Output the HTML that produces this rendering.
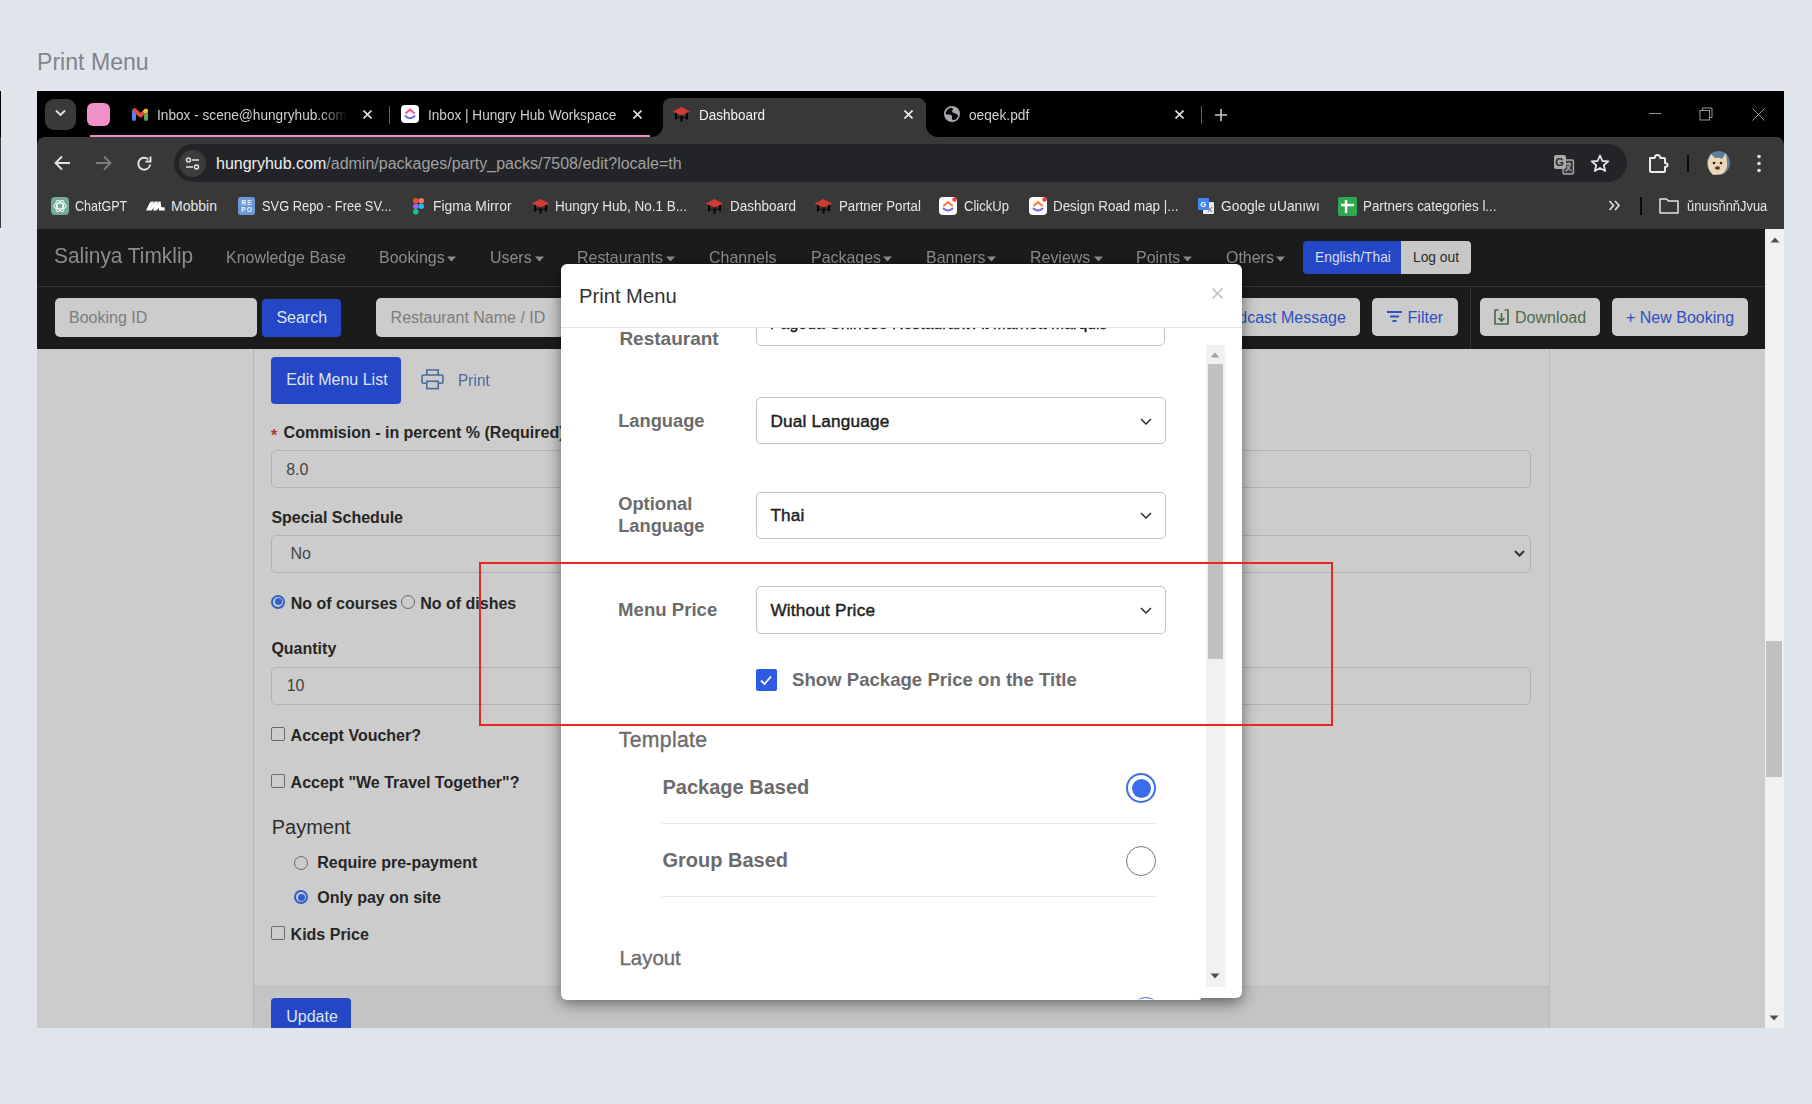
<!DOCTYPE html>
<html><head><meta charset="utf-8"><title>Print Menu</title>
<style>
html,body{margin:0;padding:0;}
body{width:1812px;height:1104px;overflow:hidden;position:relative;background:#e0e4eb;font-family:"Liberation Sans",sans-serif;}
body div, body svg{position:absolute;}
.t{white-space:nowrap;}
.fade{overflow:hidden;-webkit-mask-image:linear-gradient(90deg,#000 85%,transparent);}
</style></head><body>
<div class="t" style="left:37px;top:51.35px;font-size:23.1px;line-height:23.1px;color:#80858c;font-weight:400;">Print Menu</div>
<div style="left:0px;top:91px;width:1px;height:46px;background:#000"></div>
<div style="left:0px;top:137px;width:1px;height:91px;background:#3a3a3a"></div>
<div style="left:37px;top:91px;width:1747px;height:56px;background:#000"></div>
<div style="left:37px;top:137px;width:1747px;height:92px;background:#383838;border-top-left-radius:8px;border-top-right-radius:8px"></div>
<div style="left:45px;top:99px;width:31px;height:31px;background:#3a3a3a;border-radius:9px"></div>
<svg style="left:55px;top:109px" width="11" height="8" viewBox="0 0 11 8"><path d="M1 1.5 L5.5 6 L10 1.5" fill="none" stroke="#e8e8e8" stroke-width="1.8"/></svg>
<div style="left:87px;top:103px;width:23px;height:23px;background:#ef90c9;border-radius:6px"></div>
<div style="left:90px;top:135px;width:560px;height:2px;background:#f08cc8"></div>
<div style="left:663px;top:98px;width:263px;height:39px;background:#383838;border-radius:8px 8px 0 0"></div>
<svg style="left:651px;top:125px" width="12" height="12" viewBox="0 0 12 12"><path d="M0 12 A12 12 0 0 0 12 0 L12 12 Z" fill="#383838"/></svg>
<svg style="left:926px;top:125px" width="12" height="12" viewBox="0 0 12 12"><path d="M12 12 A12 12 0 0 1 0 0 L0 12 Z" fill="#383838"/></svg>
<div style="left:388.5px;top:106px;width:1.5px;height:18px;background:#5f5f5f"></div>
<div style="left:1200.5px;top:106px;width:1.5px;height:18px;background:#5f5f5f"></div>
<svg style="left:130px;top:105px" width="20" height="18" viewBox="0 0 20 18"><path d="M4 6 V14" stroke="#4f86f7" stroke-width="4" stroke-linecap="round"/><path d="M16 6 V14" stroke="#56ab5f" stroke-width="4" stroke-linecap="round"/><path d="M4.5 5 L10.5 10.5 L14.8 6.6" fill="none" stroke="#df4a3b" stroke-width="4" stroke-linecap="round" stroke-linejoin="round"/><path d="M15.2 6.2 L16 5.5" stroke="#f3c03a" stroke-width="4" stroke-linecap="round"/></svg>
<div class="t fade" style="left:157px;top:108.15px;width:196px;height:18px;font-size:14px;line-height:14px;color:#d0d0d0;transform:scaleX(0.975);transform-origin:0 0">Inbox - scene@hungryhub.com</div>
<svg style="left:362.5px;top:110px" width="9" height="9" viewBox="0 0 9 9"><path d="M0.5 0.5 L8.5 8.5 M8.5 0.5 L0.5 8.5" stroke="#e0e0e0" stroke-width="1.6"/></svg>
<div style="left:401px;top:105px;width:18px;height:18px;background:#fff;border-radius:4px"></div>
<svg style="left:401px;top:105px" width="18" height="18" viewBox="0 0 18 18"><path d="M5 8 L9 4.5 L13 8" fill="none" stroke="#f7568a" stroke-width="2" stroke-linecap="round"/><path d="M4.5 11 Q9 15.5 13.5 11" fill="none" stroke="#7b68ee" stroke-width="2" stroke-linecap="round"/></svg>
<div class="t" style="left:427.6px;top:108.05px;font-size:14px;line-height:14px;color:#d0d0d0;font-weight:400;;transform:scaleX(0.971);transform-origin:0 0">Inbox | Hungry Hub Workspace</div>
<svg style="left:633px;top:110px" width="9" height="9" viewBox="0 0 9 9"><path d="M0.5 0.5 L8.5 8.5 M8.5 0.5 L0.5 8.5" stroke="#e0e0e0" stroke-width="1.6"/></svg>
<svg style="left:671px;top:105px" width="21" height="18" viewBox="0 0 21 18"><rect x="4" y="7" width="2" height="7.5" fill="#050505"/><rect x="15" y="7" width="2" height="7.5" fill="#050505"/><rect x="9.6" y="9" width="2" height="7.7" fill="#050505"/><path d="M5 11.8 L10.6 13.2 L16 11.8" fill="none" stroke="#111" stroke-width="1.3"/><path d="M1.6 6.4 L10.6 2.1 L19.1 6.4 L10.6 10.5 Z" fill="#d23a33"/></svg>
<div class="t" style="left:699px;top:108.05px;font-size:14px;line-height:14px;color:#f2f2f2;font-weight:400;;transform:scaleX(0.963);transform-origin:0 0">Dashboard</div>
<svg style="left:904px;top:110px" width="9" height="9" viewBox="0 0 9 9"><path d="M0.5 0.5 L8.5 8.5 M8.5 0.5 L0.5 8.5" stroke="#f0f0f0" stroke-width="1.6"/></svg>
<svg style="left:943px;top:105px" width="18" height="18" viewBox="0 0 18 18"><circle cx="9" cy="9" r="8" fill="#a6a9ae"/><path d="M2.7 9.2 A6.3 6.3 0 0 1 8.6 2.7 Q10.5 3.3 9.8 4.8 Q8.6 5.6 9.3 7.2 Q10.6 8.2 11.9 8.3 Q13.2 8.6 15.2 10.3 A6.3 6.3 0 0 1 10 15.3 Q8.6 14.8 9 13.3 Q9.8 12 8.7 10.6 Q7.5 9.3 5 9.4 Z" fill="#000"/></svg>
<div class="t" style="left:969px;top:108.05px;font-size:14px;line-height:14px;color:#d0d0d0;font-weight:400;;transform:scaleX(0.979);transform-origin:0 0">oeqek.pdf</div>
<svg style="left:1175px;top:110px" width="9" height="9" viewBox="0 0 9 9"><path d="M0.5 0.5 L8.5 8.5 M8.5 0.5 L0.5 8.5" stroke="#e0e0e0" stroke-width="1.6"/></svg>
<svg style="left:1215px;top:108.5px" width="12" height="12" viewBox="0 0 12 12"><path d="M6 0 V12 M0 6 H12" stroke="#c8c8c8" stroke-width="1.6"/></svg>
<div style="left:1649px;top:113px;width:12px;height:1px;background:#9a9a9a"></div>
<svg style="left:1699px;top:107px" width="14" height="14" viewBox="0 0 14 14"><rect x="1" y="3.5" width="9.5" height="9.5" fill="none" stroke="#9a9a9a" stroke-width="1"/><path d="M3.5 3.5 V1 H13 V10.5 H10.5" fill="none" stroke="#9a9a9a" stroke-width="1"/></svg>
<svg style="left:1752px;top:108px" width="13" height="13" viewBox="0 0 13 13"><path d="M0.5 0.5 L12.5 12.5 M12.5 0.5 L0.5 12.5" stroke="#9a9a9a" stroke-width="1"/></svg>
<svg style="left:54px;top:155px" width="17" height="16" viewBox="0 0 17 16"><path d="M16 8 H2 M8 1.5 L1.5 8 L8 14.5" fill="none" stroke="#e3e3e3" stroke-width="1.9"/></svg>
<svg style="left:95px;top:155px" width="17" height="16" viewBox="0 0 17 16"><path d="M1 8 H15 M9 1.5 L15.5 8 L9 14.5" fill="none" stroke="#7d7d7d" stroke-width="1.9"/></svg>
<svg style="left:136px;top:155px" width="17" height="17" viewBox="0 0 17 17"><path d="M14.2 9.5 A6 6 0 1 1 12.2 4.2" fill="none" stroke="#e3e3e3" stroke-width="1.9"/><path d="M14.5 1.5 V6.5 H9.5" fill="none" stroke="#e3e3e3" stroke-width="1.9"/></svg>
<div style="left:174px;top:144px;width:1453px;height:38px;background:#232427;border-radius:19px"></div>
<div style="left:179px;top:150px;width:27px;height:27px;background:#3c3c3c;border-radius:50%"></div>
<svg style="left:185px;top:156px" width="15" height="15" viewBox="0 0 15 15"><circle cx="3.5" cy="4" r="2" fill="none" stroke="#e3e3e3" stroke-width="1.5"/><path d="M7 4 H14" stroke="#e3e3e3" stroke-width="1.5"/><circle cx="11.5" cy="11" r="2" fill="none" stroke="#e3e3e3" stroke-width="1.5"/><path d="M1 11 H8" stroke="#e3e3e3" stroke-width="1.5"/></svg>
<div class="t" style="left:216px;top:156.26px;font-size:16px;line-height:16px;color:#a0a0a0;font-weight:400;"><span style="color:#f0f0f0">hungryhub.com</span>/admin/packages/party_packs/7508/edit?locale=th</div>
<svg style="left:1553px;top:154px" width="22" height="21" viewBox="0 0 22 21"><rect x="10" y="6" width="10.5" height="14" rx="1.5" fill="#3a3a3a" stroke="#a8a8a8" stroke-width="1.4"/><rect x="1" y="1" width="12" height="14" rx="2" fill="#a8a8a8"/><text x="2.2" y="12.2" font-size="11" font-family="Liberation Sans" font-weight="700" fill="#2a2a2a">G</text><path d="M12.5 10 H18 M15.5 8.5 V10 M17 10.5 Q15.5 16 12.5 17 M14 12 Q16 15.5 18.5 17" fill="none" stroke="#a8a8a8" stroke-width="1.3"/></svg>
<svg style="left:1590px;top:154px" width="20" height="19" viewBox="0 0 20 19"><path d="M10 1.5 L12.4 7 L18.3 7.4 L13.8 11.3 L15.2 17 L10 14 L4.8 17 L6.2 11.3 L1.7 7.4 L7.6 7 Z" fill="none" stroke="#e3e3e3" stroke-width="1.8" stroke-linejoin="round"/></svg>
<svg style="left:1647px;top:152px" width="22" height="22" viewBox="0 0 22 22"><path d="M3 6 H7.5 Q8 3 10.5 3 Q13 3 13.5 6 H17 Q18 6 18 7 V11 Q20.5 11.3 20.5 13 Q20.5 14.7 18 15 V19 Q18 20 17 20 H4 Q3 20 3 19 Z" fill="none" stroke="#ececec" stroke-width="2" stroke-linejoin="round"/></svg>
<div style="left:1687px;top:155px;width:2px;height:17px;background:#0a0a0a"></div>
<div style="left:1707px;top:151px;width:23px;height:24px;border-radius:50%;background:#5f7f9f;overflow:hidden"></div>
<svg style="left:1707px;top:151px" width="23" height="24" viewBox="0 0 23 24"><path d="M1 10 L4 3 L8 7 Q12 6 15 8 L19 2 L20 11 Q21 19 15 23 L6 24 Q0 19 1 10 Z" fill="#ecd6b4"/><circle cx="7" cy="12" r="1.3" fill="#222"/><circle cx="14" cy="12" r="1.3" fill="#222"/><ellipse cx="10.5" cy="17" rx="2.5" ry="1.8" fill="#4a3a30"/></svg>
<svg style="left:1756px;top:154px" width="6" height="19" viewBox="0 0 6 19"><circle cx="3" cy="2.5" r="1.8" fill="#e3e3e3"/><circle cx="3" cy="9.5" r="1.8" fill="#e3e3e3"/><circle cx="3" cy="16.5" r="1.8" fill="#e3e3e3"/></svg>
<div style="left:51px;top:197px;width:18px;height:18px;background:#74aa9c;border-radius:4px"></div>
<svg style="left:51px;top:197px" width="18" height="18" viewBox="0 0 18 18"><g fill="none" stroke="#fff" stroke-width="1.1"><ellipse cx="9" cy="9" rx="6" ry="3" /><ellipse cx="9" cy="9" rx="6" ry="3" transform="rotate(60 9 9)"/><ellipse cx="9" cy="9" rx="6" ry="3" transform="rotate(120 9 9)"/></g></svg>
<div class="t" style="left:74.7px;top:199.35px;font-size:14px;line-height:14px;color:#e6e6e6;font-weight:400;;transform:scaleX(0.895);transform-origin:0 0">ChatGPT</div>
<svg style="left:146px;top:201px" width="19" height="10" viewBox="0 0 19 10"><path d="M0 9.5 L3.4 2.2 Q4.2 0.6 5.8 0.6 H7.8 L6.8 3.2 L8.8 0.6 H12 L10.8 3.6 L12.7 0.6 H14.6 L15.4 6.2 H18.4 L18.9 9.5 H13 L12.6 6.8 L10.6 9.5 H7 L7.8 6.6 L5.6 9.5 Z" fill="#fafafa"/></svg>
<div class="t" style="left:171px;top:199.35px;font-size:14px;line-height:14px;color:#e6e6e6;font-weight:400;;transform:scaleX(1.0);transform-origin:0 0">Mobbin</div>
<div style="left:238px;top:197px;width:17px;height:18px;box-sizing:border-box;background:#6a9ad8;border-radius:2.5px;color:#eef3fb;font:700 6.5px/7.5px 'Liberation Sans';text-align:center;padding-top:1.5px;padding-left:1px;letter-spacing:1px">RE<br>PO</div>
<div class="t" style="left:261.7px;top:199.35px;font-size:14px;line-height:14px;color:#e6e6e6;font-weight:400;;transform:scaleX(0.918);transform-origin:0 0">SVG Repo - Free SV...</div>
<svg style="left:412px;top:197px" width="13" height="18" viewBox="0 0 13 18"><rect x="1" y="1" width="5.5" height="5.5" rx="2.7" fill="#f24e1e"/><rect x="6.5" y="1" width="5.5" height="5.5" rx="2.7" fill="#ff7262"/><rect x="1" y="6.5" width="5.5" height="5.5" rx="2.7" fill="#a259ff"/><circle cx="9.25" cy="9.25" r="2.75" fill="#1abcfe"/><rect x="1" y="12" width="5.5" height="5.5" rx="2.7" fill="#0acf83"/><rect x="3.7" y="1" width="5.6" height="11" fill="none"/></svg>
<div class="t" style="left:433.2px;top:199.35px;font-size:14px;line-height:14px;color:#e6e6e6;font-weight:400;;transform:scaleX(0.99);transform-origin:0 0">Figma Mirror</div>
<svg style="left:530px;top:197px" width="21" height="18" viewBox="0 0 21 18"><rect x="4" y="7" width="2" height="7.5" fill="#050505"/><rect x="15" y="7" width="2" height="7.5" fill="#050505"/><rect x="9.6" y="9" width="2" height="7.7" fill="#050505"/><path d="M5 11.8 L10.6 13.2 L16 11.8" fill="none" stroke="#111" stroke-width="1.3"/><path d="M1.6 6.4 L10.6 2.1 L19.1 6.4 L10.6 10.5 Z" fill="#d23a33"/></svg>
<div class="t" style="left:555.3px;top:199.35px;font-size:14px;line-height:14px;color:#e6e6e6;font-weight:400;;transform:scaleX(0.964);transform-origin:0 0">Hungry Hub, No.1 B...</div>
<svg style="left:704px;top:197px" width="21" height="18" viewBox="0 0 21 18"><rect x="4" y="7" width="2" height="7.5" fill="#050505"/><rect x="15" y="7" width="2" height="7.5" fill="#050505"/><rect x="9.6" y="9" width="2" height="7.7" fill="#050505"/><path d="M5 11.8 L10.6 13.2 L16 11.8" fill="none" stroke="#111" stroke-width="1.3"/><path d="M1.6 6.4 L10.6 2.1 L19.1 6.4 L10.6 10.5 Z" fill="#d23a33"/></svg>
<div class="t" style="left:729.5px;top:199.35px;font-size:14px;line-height:14px;color:#e6e6e6;font-weight:400;;transform:scaleX(0.963);transform-origin:0 0">Dashboard</div>
<svg style="left:813px;top:197px" width="21" height="18" viewBox="0 0 21 18"><rect x="4" y="7" width="2" height="7.5" fill="#050505"/><rect x="15" y="7" width="2" height="7.5" fill="#050505"/><rect x="9.6" y="9" width="2" height="7.7" fill="#050505"/><path d="M5 11.8 L10.6 13.2 L16 11.8" fill="none" stroke="#111" stroke-width="1.3"/><path d="M1.6 6.4 L10.6 2.1 L19.1 6.4 L10.6 10.5 Z" fill="#d23a33"/></svg>
<div class="t" style="left:838.7px;top:199.35px;font-size:14px;line-height:14px;color:#e6e6e6;font-weight:400;;transform:scaleX(0.948);transform-origin:0 0">Partner Portal</div>
<div style="left:939px;top:197px;width:18px;height:18px;background:#fff;border-radius:4px"></div>
<svg style="left:939px;top:197px" width="18" height="18" viewBox="0 0 18 18"><path d="M5 8.5 L9 5 L13 8.5" fill="none" stroke="#ff7a3d" stroke-width="2" stroke-linecap="round"/><path d="M4.5 11.5 Q9 15.5 13.5 11.5" fill="none" stroke="#7b68ee" stroke-width="2" stroke-linecap="round"/><circle cx="15.5" cy="2.5" r="2.2" fill="#ea4335"/></svg>
<div class="t" style="left:963.6px;top:199.35px;font-size:14px;line-height:14px;color:#e6e6e6;font-weight:400;;transform:scaleX(0.933);transform-origin:0 0">ClickUp</div>
<div style="left:1029px;top:197px;width:18px;height:18px;background:#fff;border-radius:4px"></div>
<svg style="left:1029px;top:197px" width="18" height="18" viewBox="0 0 18 18"><path d="M5 8.5 L9 5 L13 8.5" fill="none" stroke="#ff7a3d" stroke-width="2" stroke-linecap="round"/><path d="M4.5 11.5 Q9 15.5 13.5 11.5" fill="none" stroke="#7b68ee" stroke-width="2" stroke-linecap="round"/><circle cx="15.5" cy="2.5" r="2.2" fill="#ea4335"/></svg>
<div class="t" style="left:1053.3px;top:199.35px;font-size:14px;line-height:14px;color:#e6e6e6;font-weight:400;;transform:scaleX(0.955);transform-origin:0 0">Design Road map |...</div>
<svg style="left:1197px;top:197px" width="18" height="18" viewBox="0 0 18 18"><rect x="6" y="5" width="11" height="12" rx="1" fill="#e8eaed"/><rect x="1" y="1" width="11" height="12" rx="1" fill="#4285f4"/><text x="3.3" y="10" font-size="7.5" font-family="Liberation Sans" font-weight="700" fill="#fff">G</text><path d="M11 10 L15 15 M15 10 L11 15" stroke="#777" stroke-width="1"/></svg>
<div class="t" style="left:1220.5px;top:199.35px;font-size:14px;line-height:14px;color:#e6e6e6;font-weight:400;;transform:scaleX(0.985);transform-origin:0 0">Google uUanıwı</div>
<div style="left:1338px;top:197px;width:19px;height:19px;background:#2fa84f;border-radius:2px"></div>
<svg style="left:1338px;top:197px" width="19" height="19" viewBox="0 0 19 19"><path d="M3 8 H16 M8 3 V16" stroke="#fff" stroke-width="2.4"/></svg>
<div class="t" style="left:1362.7px;top:199.35px;font-size:14px;line-height:14px;color:#e6e6e6;font-weight:400;;transform:scaleX(0.953);transform-origin:0 0">Partners categories l...</div>
<svg style="left:1608px;top:200px" width="13" height="11" viewBox="0 0 13 11"><path d="M1.5 1 L5.5 5.5 L1.5 10 M7 1 L11 5.5 L7 10" fill="none" stroke="#e3e3e3" stroke-width="1.6"/></svg>
<div style="left:1640px;top:197px;width:2px;height:18px;background:#0a0a0a"></div>
<svg style="left:1659px;top:197px" width="20" height="17" viewBox="0 0 20 17"><path d="M1 2 H7.5 L9.5 4 H19 V16 H1 Z" fill="none" stroke="#e3e3e3" stroke-width="1.5" stroke-linejoin="round"/></svg>
<div class="t" style="left:1686.5px;top:199.35px;font-size:14px;line-height:14px;color:#e6e6e6;font-weight:400;;transform:scaleX(0.92);transform-origin:0 0">ŭnuısňnňJvua</div>
<div style="left:37px;top:229px;width:1728px;height:57px;background:#1b1b1b"></div>
<div style="left:37px;top:286px;width:1728px;height:1px;background:#353535"></div>
<div style="left:37px;top:287px;width:1728px;height:62px;background:#1b1b1b"></div>
<div style="left:1470px;top:287px;width:1px;height:62px;background:#333"></div>
<div class="t" style="left:53.5px;top:246.37px;font-size:21.3px;line-height:21.3px;color:#8c8c8c;font-weight:400;;transform:scaleX(0.98);transform-origin:0 0">Salinya Timklip</div>
<div class="t" style="left:225.6px;top:248.53px;font-size:16.5px;line-height:16.5px;color:#8c8c8c;font-weight:400;;transform:scaleX(0.967);transform-origin:0 0">Knowledge Base</div>
<div class="t" style="left:379.3px;top:248.53px;font-size:16.5px;line-height:16.5px;color:#8c8c8c;font-weight:400;;transform:scaleX(0.967);transform-origin:0 0">Bookings</div>
<svg style="left:447.3px;top:256px" width="9" height="6" viewBox="0 0 9 6"><path d="M0 0.5 H9 L4.5 5.5 Z" fill="#8c8c8c"/></svg>
<div class="t" style="left:490.2px;top:248.53px;font-size:16.5px;line-height:16.5px;color:#8c8c8c;font-weight:400;;transform:scaleX(0.967);transform-origin:0 0">Users</div>
<svg style="left:534.7px;top:256px" width="9" height="6" viewBox="0 0 9 6"><path d="M0 0.5 H9 L4.5 5.5 Z" fill="#8c8c8c"/></svg>
<div class="t" style="left:577.3px;top:248.53px;font-size:16.5px;line-height:16.5px;color:#8c8c8c;font-weight:400;;transform:scaleX(0.967);transform-origin:0 0">Restaurants</div>
<svg style="left:665.8px;top:256px" width="9" height="6" viewBox="0 0 9 6"><path d="M0 0.5 H9 L4.5 5.5 Z" fill="#8c8c8c"/></svg>
<div class="t" style="left:709px;top:248.53px;font-size:16.5px;line-height:16.5px;color:#8c8c8c;font-weight:400;;transform:scaleX(0.967);transform-origin:0 0">Channels</div>
<div class="t" style="left:810.5px;top:248.53px;font-size:16.5px;line-height:16.5px;color:#8c8c8c;font-weight:400;;transform:scaleX(0.967);transform-origin:0 0">Packages</div>
<svg style="left:882.6px;top:256px" width="9" height="6" viewBox="0 0 9 6"><path d="M0 0.5 H9 L4.5 5.5 Z" fill="#8c8c8c"/></svg>
<div class="t" style="left:925.9px;top:248.53px;font-size:16.5px;line-height:16.5px;color:#8c8c8c;font-weight:400;;transform:scaleX(0.967);transform-origin:0 0">Banners</div>
<svg style="left:986.8px;top:256px" width="9" height="6" viewBox="0 0 9 6"><path d="M0 0.5 H9 L4.5 5.5 Z" fill="#8c8c8c"/></svg>
<div class="t" style="left:1030.4px;top:248.53px;font-size:16.5px;line-height:16.5px;color:#8c8c8c;font-weight:400;;transform:scaleX(0.967);transform-origin:0 0">Reviews</div>
<svg style="left:1093.5px;top:256px" width="9" height="6" viewBox="0 0 9 6"><path d="M0 0.5 H9 L4.5 5.5 Z" fill="#8c8c8c"/></svg>
<div class="t" style="left:1135.8px;top:248.53px;font-size:16.5px;line-height:16.5px;color:#8c8c8c;font-weight:400;;transform:scaleX(0.967);transform-origin:0 0">Points</div>
<svg style="left:1183px;top:256px" width="9" height="6" viewBox="0 0 9 6"><path d="M0 0.5 H9 L4.5 5.5 Z" fill="#8c8c8c"/></svg>
<div class="t" style="left:1225.9px;top:248.53px;font-size:16.5px;line-height:16.5px;color:#8c8c8c;font-weight:400;;transform:scaleX(0.967);transform-origin:0 0">Others</div>
<svg style="left:1276.2px;top:256px" width="9" height="6" viewBox="0 0 9 6"><path d="M0 0.5 H9 L4.5 5.5 Z" fill="#8c8c8c"/></svg>
<div style="left:1303px;top:241px;width:98px;height:33px;background:#2347c5;border-radius:4px 0 0 4px"></div>
<div style="left:1401px;top:241px;width:70px;height:33px;background:#c8c8c8;border-radius:0 4px 4px 0"></div>
<div class="t" style="left:1315px;top:250.52px;font-size:13.8px;line-height:13.8px;color:#d6dcf0;font-weight:400;">English/Thai</div>
<div class="t" style="left:1413px;top:250.52px;font-size:13.8px;line-height:13.8px;color:#2a2a2a;font-weight:400;">Log out</div>
<div style="left:55px;top:298px;width:202px;height:39px;background:#cccccc;border-radius:5px"></div>
<div class="t" style="left:69px;top:310.46px;font-size:16px;line-height:16px;color:#7d7d7d;font-weight:400;">Booking ID</div>
<div style="left:262px;top:299px;width:79px;height:38px;background:#2347c5;border-radius:4px"></div>
<div class="t" style="left:276.4px;top:309.96px;font-size:16px;line-height:16px;color:#dfe3f2;font-weight:400;">Search</div>
<div style="left:376px;top:298px;width:300px;height:39px;background:#cccccc;border-radius:5px"></div>
<div class="t" style="left:390.6px;top:310.46px;font-size:16px;line-height:16px;color:#7d7d7d;font-weight:400;">Restaurant Name / ID</div>
<div style="left:1100px;top:298px;width:260px;height:38px;background:#cccccc;border-radius:5px"></div>
<div class="t" style="left:1210px;top:309.76px;font-size:16px;line-height:16px;color:#2f4fc0;font-weight:400;left:auto;right:466.1px">Broadcast Message</div>
<div style="left:1372px;top:298px;width:86px;height:38px;background:#cccccc;border-radius:5px"></div>
<svg style="left:1387px;top:311px" width="15" height="12" viewBox="0 0 15 12"><path d="M0 1 H15 M3 5.5 H12 M5.5 10 H9.5" stroke="#2f4fc0" stroke-width="1.8"/></svg>
<div class="t" style="left:1407.6px;top:309.76px;font-size:16px;line-height:16px;color:#2f4fc0;font-weight:400;">Filter</div>
<div style="left:1480px;top:298px;width:120px;height:38px;background:#cccccc;border-radius:5px"></div>
<svg style="left:1494px;top:309px" width="15" height="16" viewBox="0 0 15 16"><path d="M4.5 1 H1 V15 H14 V1 H10.5" fill="none" stroke="#4d6b4b" stroke-width="1.7"/><path d="M7.5 4 V12 M4.5 9 L7.5 12 L10.5 9" fill="none" stroke="#4d6b4b" stroke-width="1.7"/></svg>
<div class="t" style="left:1515px;top:309.76px;font-size:16px;line-height:16px;color:#4d6b4b;font-weight:400;">Download</div>
<div style="left:1612px;top:298px;width:136px;height:38px;background:#cccccc;border-radius:5px"></div>
<div class="t" style="left:1626px;top:309.76px;font-size:16px;line-height:16px;color:#2f4fc0;font-weight:400;">+ New Booking</div>
<div style="left:37px;top:349px;width:1728px;height:679px;background:#cccccc"></div>
<div style="left:253px;top:349px;width:1px;height:679px;background:#b5b5b5"></div>
<div style="left:1549px;top:349px;width:1px;height:679px;background:#b8b8b8"></div>
<div style="left:254px;top:986px;width:1295px;height:1px;background:#bdbdbd"></div>
<div style="left:254px;top:987px;width:1295px;height:41px;background:#c4c4c4"></div>
<div style="left:1765px;top:229px;width:19px;height:799px;background:#f1f1f1"></div>
<div style="left:1766px;top:641px;width:16px;height:136px;background:#c1c1c1"></div>
<svg style="left:1770px;top:236.5px" width="10" height="6" viewBox="0 0 10 6"><path d="M0.5 5.5 L5 0.5 L9.5 5.5 Z" fill="#505050"/></svg>
<svg style="left:1769px;top:1015px" width="10" height="6" viewBox="0 0 10 6"><path d="M0.5 0.5 L5 5.5 L9.5 0.5 Z" fill="#505050"/></svg>
<div style="left:271px;top:357px;width:130px;height:47px;background:#2347c5;border-radius:4px"></div>
<div class="t" style="left:286.2px;top:372.36px;font-size:16px;line-height:16px;color:#dfe3f2;font-weight:400;">Edit Menu List</div>
<svg style="left:421px;top:369px" width="24" height="21" viewBox="0 0 24 21"><path d="M5.8 6 V1 H17.2 V6" fill="none" stroke="#4b6a98" stroke-width="1.6"/><path d="M5.8 14.3 H2.5 Q1 14.3 1 12.8 V7.5 Q1 6 2.5 6 H20.5 Q22 6 22 7.5 V12.8 Q22 14.3 20.5 14.3 H17.2" fill="none" stroke="#4b6a98" stroke-width="1.6"/><rect x="5.8" y="12.3" width="11.4" height="7.3" fill="none" stroke="#4b6a98" stroke-width="1.6"/></svg>
<div class="t" style="left:458px;top:372.76px;font-size:16px;line-height:16px;color:#4b6a98;font-weight:400;;transform:scaleX(0.97);transform-origin:0 0">Print</div>
<div class="t" style="left:271px;top:428.46px;font-size:16px;line-height:16px;color:#b8352f;font-weight:700;">*</div>
<div class="t" style="left:283.6px;top:425.26px;font-size:16px;line-height:16px;color:#262626;font-weight:700;">Commision - in percent % (Required)</div>
<div style="left:271px;top:450px;width:1260px;height:38px;background:#cccccc;border:1px solid #b3b3b3;border-radius:5px;box-sizing:border-box"></div>
<div class="t" style="left:286.2px;top:461.86px;font-size:16px;line-height:16px;color:#444;font-weight:400;">8.0</div>
<div class="t" style="left:271.4px;top:510.46px;font-size:16px;line-height:16px;color:#262626;font-weight:700;">Special Schedule</div>
<div style="left:271px;top:535px;width:1260px;height:38px;background:#cccccc;border:1px solid #b3b3b3;border-radius:5px;box-sizing:border-box"></div>
<div class="t" style="left:290.4px;top:545.66px;font-size:16px;line-height:16px;color:#444;font-weight:400;">No</div>
<svg style="left:1514px;top:550px" width="11" height="7" viewBox="0 0 11 7"><path d="M1 1 L5.5 5.5 L10 1" fill="none" stroke="#333" stroke-width="2"/></svg>
<div style="left:271px;top:594.5px;width:14px;height:14px;border-radius:50%;background:#2f5fc9;box-sizing:border-box"></div>
<div style="left:273px;top:596.5px;width:10px;height:10px;border-radius:50%;background:#cccccc;"></div>
<div style="left:274.5px;top:598.0px;width:7px;height:7px;border-radius:50%;background:#2f5fc9;"></div>
<div class="t" style="left:290.8px;top:595.56px;font-size:16px;line-height:16px;color:#262626;font-weight:700;">No of courses</div>
<div style="left:401px;top:594.5px;width:14px;height:14px;border-radius:50%;border:1px solid #6a6a6a;box-sizing:border-box"></div>
<div class="t" style="left:420.2px;top:595.56px;font-size:16px;line-height:16px;color:#262626;font-weight:700;">No of dishes</div>
<div class="t" style="left:271.4px;top:641.46px;font-size:16px;line-height:16px;color:#262626;font-weight:700;">Quantity</div>
<div style="left:271px;top:667px;width:1260px;height:38px;background:#cccccc;border:1px solid #b3b3b3;border-radius:5px;box-sizing:border-box"></div>
<div class="t" style="left:286.7px;top:678.46px;font-size:16px;line-height:16px;color:#444;font-weight:400;">10</div>
<div style="left:271px;top:727px;width:14px;height:14px;border-radius:2px;border:1px solid #6a6a6a;box-sizing:border-box"></div>
<div class="t" style="left:290.6px;top:728.16px;font-size:16px;line-height:16px;color:#262626;font-weight:700;">Accept Voucher?</div>
<div style="left:271px;top:774px;width:14px;height:14px;border-radius:2px;border:1px solid #6a6a6a;box-sizing:border-box"></div>
<div class="t" style="left:290.6px;top:775.36px;font-size:16px;line-height:16px;color:#262626;font-weight:700;">Accept "We Travel Together"?</div>
<div class="t" style="left:271.7px;top:817.47px;font-size:20px;line-height:20px;color:#2e2e2e;font-weight:400;">Payment</div>
<div style="left:294px;top:856px;width:14px;height:14px;border-radius:50%;border:1px solid #6a6a6a;box-sizing:border-box"></div>
<div class="t" style="left:317.2px;top:855.06px;font-size:16px;line-height:16px;color:#262626;font-weight:700;">Require pre-payment</div>
<div style="left:294px;top:890px;width:14px;height:14px;border-radius:50%;background:#2f5fc9;box-sizing:border-box"></div>
<div style="left:296px;top:892px;width:10px;height:10px;border-radius:50%;background:#cccccc;"></div>
<div style="left:297.5px;top:893.5px;width:7px;height:7px;border-radius:50%;background:#2f5fc9;"></div>
<div class="t" style="left:317.2px;top:889.86px;font-size:16px;line-height:16px;color:#262626;font-weight:700;">Only pay on site</div>
<div style="left:271px;top:926px;width:14px;height:14px;border-radius:2px;border:1px solid #6a6a6a;box-sizing:border-box"></div>
<div class="t" style="left:290.6px;top:926.96px;font-size:16px;line-height:16px;color:#262626;font-weight:700;">Kids Price</div>
<div style="left:271px;top:997.5px;width:80px;height:40px;background:#2347c5;border-radius:4px"></div>
<div class="t" style="left:286.2px;top:1009.26px;font-size:16px;line-height:16px;color:#dfe3f2;font-weight:400;">Update</div>
<div style="left:561px;top:264px;width:681px;height:734px;background:#fff;border-radius:6px;box-shadow:0 5px 15px rgba(0,0,0,.5)"></div>
<div class="t" style="left:579px;top:285.6px;font-size:20.2px;line-height:20.2px;color:#333;font-weight:400;">Print Menu</div>
<svg style="left:1212px;top:288px" width="11" height="11" viewBox="0 0 11 11"><path d="M0.5 0.5 L10.5 10.5 M10.5 0.5 L0.5 10.5" stroke="#c4c4c4" stroke-width="1.6"/></svg>
<div style="left:561px;top:327px;width:681px;height:1px;background:#e5e5e5"></div>
<div style="left:561px;top:990px;width:640px;height:9.5px;background:#fff;border-radius:0 0 2px 6px"></div>
<div style="left:561px;top:328px;width:681px;height:671.5px;overflow:hidden;border-radius:0 0 6px 6px;clip-path:polygon(0 0,100% 0,100% 670px,640px 670px,640px 100%,0 100%)">
<div class="t" style="left:58.39999999999998px;top:1.12px;font-size:19px;line-height:19px;color:#6b6b6b;font-weight:700;">Restaurant</div>
<div style="left:194.5px;top:-30px;width:409px;height:47.5px;border:1px solid #c4c4c4;border-radius:5px;box-sizing:border-box"></div>
<div class="t" style="left:209.39999999999998px;top:-13.06px;font-size:17.2px;line-height:17.2px;color:#1e1e1e;font-weight:400;-webkit-text-stroke:0.45px #1e1e1e;transform:scaleX(0.925);transform-origin:0 0">Pagoda Chinese Restaurant At Marriott Marquis</div>
<div class="t" style="left:57.200000000000045px;top:83.51px;font-size:18.3px;line-height:18.3px;color:#6b6b6b;font-weight:700;">Language</div>
<div style="left:194.5px;top:69px;width:410px;height:47px;border:1px solid #bfc2c7;border-radius:5px;box-sizing:border-box"></div>
<div class="t" style="left:209.39999999999998px;top:85.44px;font-size:17.2px;line-height:17.2px;color:#1e1e1e;font-weight:400;-webkit-text-stroke:0.45px #1e1e1e;letter-spacing:0.2px">Dual Language</div>
<svg style="left:579px;top:90px" width="12" height="8" viewBox="0 0 12 8"><path d="M1 1 L6 6 L11 1" fill="none" stroke="#2a2a2a" stroke-width="1.5"/></svg>
<div class="t" style="left:57.200000000000045px;top:167.41px;font-size:18.3px;line-height:18.3px;color:#6b6b6b;font-weight:700;">Optional</div>
<div class="t" style="left:57.200000000000045px;top:188.81px;font-size:18.3px;line-height:18.3px;color:#6b6b6b;font-weight:700;">Language</div>
<div style="left:194.5px;top:164px;width:410px;height:47px;border:1px solid #bfc2c7;border-radius:5px;box-sizing:border-box"></div>
<div class="t" style="left:209.39999999999998px;top:179.44px;font-size:17.2px;line-height:17.2px;color:#1e1e1e;font-weight:400;-webkit-text-stroke:0.45px #1e1e1e;letter-spacing:0.2px">Thai</div>
<svg style="left:579px;top:184px" width="12" height="8" viewBox="0 0 12 8"><path d="M1 1 L6 6 L11 1" fill="none" stroke="#2a2a2a" stroke-width="1.5"/></svg>
<div class="t" style="left:57.10000000000002px;top:272.66px;font-size:18.6px;line-height:18.6px;color:#6b6b6b;font-weight:700;">Menu Price</div>
<div style="left:194.5px;top:258.29999999999995px;width:410px;height:47.3px;border:1px solid #bfc2c7;border-radius:5px;box-sizing:border-box"></div>
<div class="t" style="left:209.39999999999998px;top:274.44px;font-size:17.2px;line-height:17.2px;color:#1e1e1e;font-weight:400;-webkit-text-stroke:0.45px #1e1e1e;letter-spacing:0.2px">Without Price</div>
<svg style="left:579px;top:279px" width="12" height="8" viewBox="0 0 12 8"><path d="M1 1 L6 6 L11 1" fill="none" stroke="#2a2a2a" stroke-width="1.5"/></svg>
<div style="left:194.5px;top:341px;width:21.5px;height:22px;background:#2d5be3;border-radius:2px"></div>
<svg style="left:198px;top:346px" width="14" height="12" viewBox="0 0 14 12"><path d="M2 6.5 L5.5 10 L12 2.5" fill="none" stroke="#fff" stroke-width="1.8"/></svg>
<div class="t" style="left:231px;top:343.26px;font-size:18.6px;line-height:18.6px;color:#6b6b6b;font-weight:700;">Show Package Price on the Title</div>
<div class="t" style="left:57.700000000000045px;top:400.85px;font-size:21.2px;line-height:21.2px;color:#6b6b6b;font-weight:400;-webkit-text-stroke:0.35px #6b6b6b;letter-spacing:0.35px">Template</div>
<div class="t" style="left:101.5px;top:448.87px;font-size:20px;line-height:20px;color:#6b6b6b;font-weight:700;">Package Based</div>
<div style="left:565px;top:445px;width:30px;height:30px;border:2px solid #3c6de8;border-radius:50%;box-sizing:border-box"></div>
<div style="left:570.5px;top:450.5px;width:19px;height:19px;background:#3c6de8;border-radius:50%"></div>
<div style="left:100.5px;top:494.5px;width:494.5px;height:1px;background:#e6e6e6"></div>
<div class="t" style="left:101.5px;top:521.67px;font-size:20px;line-height:20px;color:#6b6b6b;font-weight:700;">Group Based</div>
<div style="left:565px;top:518px;width:30px;height:30px;border:1px solid #767676;border-radius:50%;box-sizing:border-box"></div>
<div style="left:100.5px;top:567.5px;width:494.5px;height:1px;background:#e6e6e6"></div>
<div class="t" style="left:58.5px;top:619.53px;font-size:20.4px;line-height:20.4px;color:#6b6b6b;font-weight:400;-webkit-text-stroke:0.35px #6b6b6b">Layout</div>
<div style="left:570px;top:669px;width:30px;height:30px;border:1.5px solid #3c6de8;border-radius:50%;box-sizing:border-box"></div>
<div style="left:645px;top:17px;width:19px;height:642px;background:#f1f1f1"></div>
<div style="left:646.5px;top:36px;width:15.5px;height:295px;background:#c1c1c1"></div>
<svg style="left:649px;top:24px" width="10" height="6" viewBox="0 0 10 6"><path d="M0.5 5.5 L5 0.5 L9.5 5.5 Z" fill="#a3a3a3"/></svg>
<svg style="left:649px;top:645px" width="10" height="6" viewBox="0 0 10 6"><path d="M0.5 0.5 L5 5.5 L9.5 0.5 Z" fill="#505050"/></svg>
</div>
<div style="left:479px;top:562px;width:854px;height:164px;border:2px solid #e8291f;box-sizing:border-box"></div>
<div style="left:0px;top:1028px;width:1812px;height:76px;background:#e0e4eb"></div>
</body></html>
